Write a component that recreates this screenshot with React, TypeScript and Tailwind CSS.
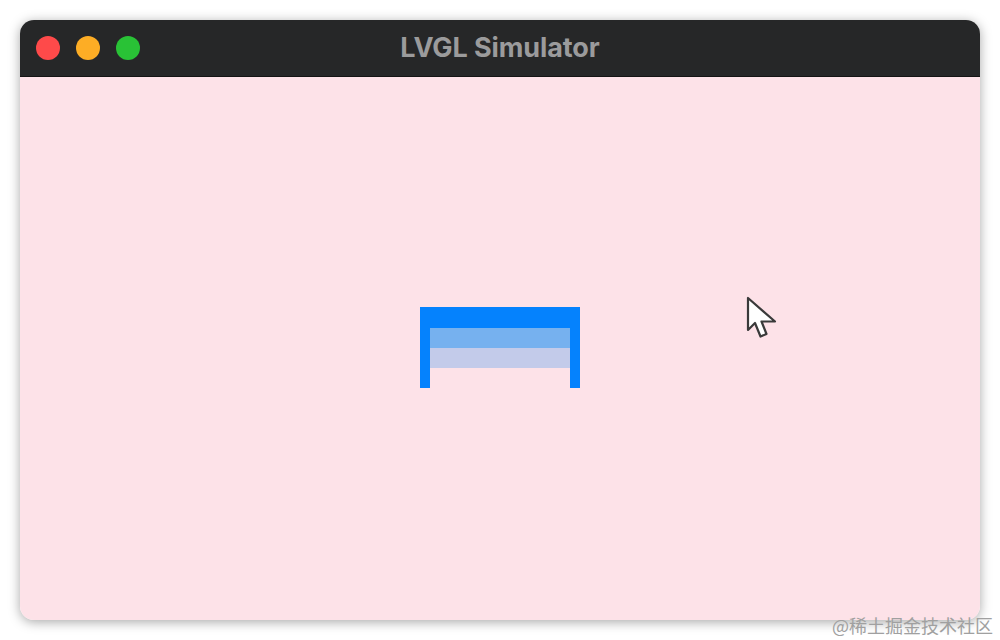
export default function App() {
  return (
    <div className="relative w-[1000px] h-[640px] bg-white p-[20px] overflow-hidden">
      <div className="relative flex flex-col w-[960px] h-[600px] rounded-[14px] overflow-hidden shadow-[0_2px_12px_rgba(0,0,0,0.35)]">
        {/* title bar */}
        <div className="relative flex items-center h-[57px] bg-[#262728] border-b border-[#141414] px-[16px] gap-[16px]">
          <span className="w-[24px] h-[24px] rounded-full bg-[#fe4a4a]" />
          <span className="w-[24px] h-[24px] rounded-full bg-[#fdad25]" />
          <span className="w-[24px] h-[24px] rounded-full bg-[#29c236]" />
          <div
            className="absolute inset-0 flex items-center justify-center text-[27px] font-bold text-[#9b9b9c] tracking-[-0.1px]"
            style={{ fontFamily: "Inter, 'Liberation Sans', sans-serif" }}
          >
            LVGL Simulator
          </div>
        </div>

        {/* screen */}
        <div className="relative flex-1 flex items-center justify-center bg-[#fde2e8]">
          <div className="flex flex-col w-[160px] h-[81px] mt-[-2px]">
            <div className="h-[21px] bg-[#0582fd]" />
            <div className="flex flex-1">
              <div className="w-[10px] bg-[#0582fd]" />
              <div className="flex flex-col flex-1">
                <div className="h-[20px] bg-[#76b1ef]" />
                <div className="h-[20px] bg-[#c3cbea]" />
              </div>
              <div className="w-[10px] bg-[#0582fd]" />
            </div>
          </div>

          <svg
            className="absolute left-[726px] top-[218px]"
            width="34"
            height="46"
            viewBox="0 0 34 46"
          >
            <path
              d="M2 3 L2 35 L9 28 L14.5 41.5 L20.5 39 L15.5 26.5 L29 26.5 Z"
              fill="#ffffff"
              stroke="#3a3a3a"
              strokeWidth="2.2"
              strokeLinejoin="round"
            />
          </svg>
        </div>
      </div>

      <div
        className="absolute right-[7px] bottom-[6px] text-[18px] text-[#a0a0a0] leading-none"
        style={{ fontFamily: "'Noto Sans CJK SC', sans-serif" }}
      >
        @稀土掘金技术社区
      </div>
    </div>
  );
}
